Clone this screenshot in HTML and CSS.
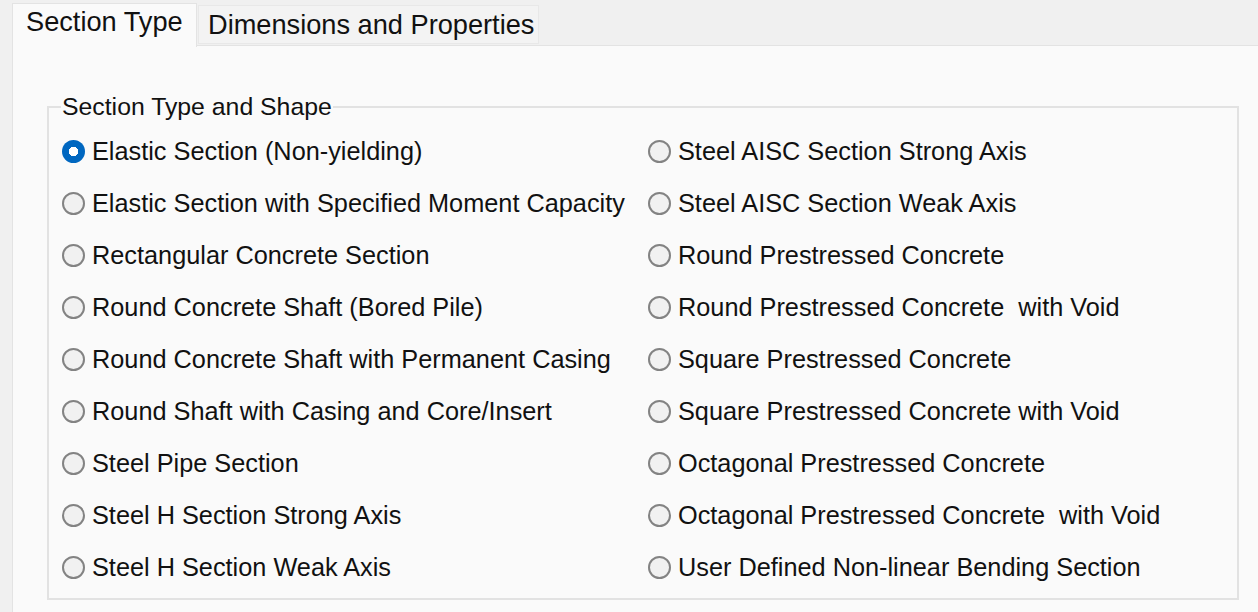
FILE: index.html
```html
<!DOCTYPE html>
<html lang="en">
<head>
  <meta charset="UTF-8">
  <title>Section Type</title>
  <link rel="stylesheet" href="styles.css">
</head>
<body>

  <!-- Tab strip -->
  <div class="tabs">
    <div class="tab active">Section Type</div>
    <div class="tab">Dimensions and Properties</div>
  </div>

  <!-- Tab page -->
  <div class="panel">
    <fieldset class="group">
      <legend>Section Type and Shape</legend>
      <div class="options">
        <label class="option"><input type="radio" name="section" checked><span>Elastic Section (Non-yielding)</span></label>
        <label class="option"><input type="radio" name="section"><span>Steel AISC Section Strong Axis</span></label>
        <label class="option"><input type="radio" name="section"><span>Elastic Section with Specified Moment Capacity</span></label>
        <label class="option"><input type="radio" name="section"><span>Steel AISC Section Weak Axis</span></label>
        <label class="option"><input type="radio" name="section"><span>Rectangular Concrete Section</span></label>
        <label class="option"><input type="radio" name="section"><span>Round Prestressed Concrete</span></label>
        <label class="option"><input type="radio" name="section"><span>Round Concrete Shaft (Bored Pile)</span></label>
        <label class="option"><input type="radio" name="section"><span>Round Prestressed Concrete  with Void</span></label>
        <label class="option"><input type="radio" name="section"><span>Round Concrete Shaft with Permanent Casing</span></label>
        <label class="option"><input type="radio" name="section"><span>Square Prestressed Concrete</span></label>
        <label class="option"><input type="radio" name="section"><span>Round Shaft with Casing and Core/Insert</span></label>
        <label class="option"><input type="radio" name="section"><span>Square Prestressed Concrete with Void</span></label>
        <label class="option"><input type="radio" name="section"><span>Steel Pipe Section</span></label>
        <label class="option"><input type="radio" name="section"><span>Octagonal Prestressed Concrete</span></label>
        <label class="option"><input type="radio" name="section"><span>Steel H Section Strong Axis</span></label>
        <label class="option"><input type="radio" name="section"><span>Octagonal Prestressed Concrete  with Void</span></label>
        <label class="option"><input type="radio" name="section"><span>Steel H Section Weak Axis</span></label>
        <label class="option"><input type="radio" name="section"><span>User Defined Non-linear Bending Section</span></label>
      </div>
    </fieldset>
  </div>

</body>
</html>
```

FILE: styles.css
```css
/* Basic styling */
body {
  font-family: "Liberation Sans", Arial, sans-serif;
  background-color: #f0f0f0;
  color: #111111;
  margin: 0;
  width: 1258px;
  height: 612px;
  overflow: hidden;
}

/* Tab strip */
.tabs {
  display: flex;
  align-items: flex-start;
  padding-left: 12px;
  padding-top: 3px;
  height: 42px;
}
.tab {
  box-sizing: border-box;
  margin-top: 2px;
  width: 341px;
  height: 39px;
  padding: 3px 0 0 9px;
  background-color: #f3f3f3;
  border: 1px solid #e8e8e8;
  font-size: 27.2px;
  line-height: 32px;
  white-space: nowrap;
}
.tab.active {
  position: relative;
  z-index: 1;
  margin-top: 0;
  margin-right: 1px;
  width: 185px;
  height: 44px;
  padding: 2px 0 0 13px;
  background-color: #fafafa;
  border-color: #e3e3e3;
  border-bottom: none;
}

/* Tab page */
.panel {
  margin-left: 12px;
  height: 570px;
  background-color: #fafafa;
  border-top: 1px solid #e3e3e3;
  border-left: 1px solid #e3e3e3;
  padding-top: 47px;
  box-sizing: border-box;
}

/* Group box */
.group {
  margin: 0 0 0 34px;
  width: 1192px;
  box-sizing: border-box;
  border: 2px solid #e2e2e2;
  padding: 4px 0 5px 13px;
}
.group legend {
  padding: 0 1px;
  margin-left: -1px;
  font-size: 24.8px;
  line-height: 28px;
}
.options {
  display: grid;
  grid-template-columns: 586px 1fr;
  grid-auto-rows: 52px;
}
.option {
  display: flex;
  align-items: center;
  gap: 7px;
  font-size: 25.3px;
  white-space: pre;
}

/* Radio buttons */
.option input {
  appearance: none;
  margin: 0;
  width: 23px;
  height: 23px;
  border-radius: 50%;
  border: 2px solid #838383;
  background-color: #f1f1f1;
  box-sizing: border-box;
  flex: none;
}
.option input:checked {
  border: none;
  background-color: #0067c0;
  background-image: radial-gradient(circle, #ffffff 0 4.5px, transparent 5px);
}
```
